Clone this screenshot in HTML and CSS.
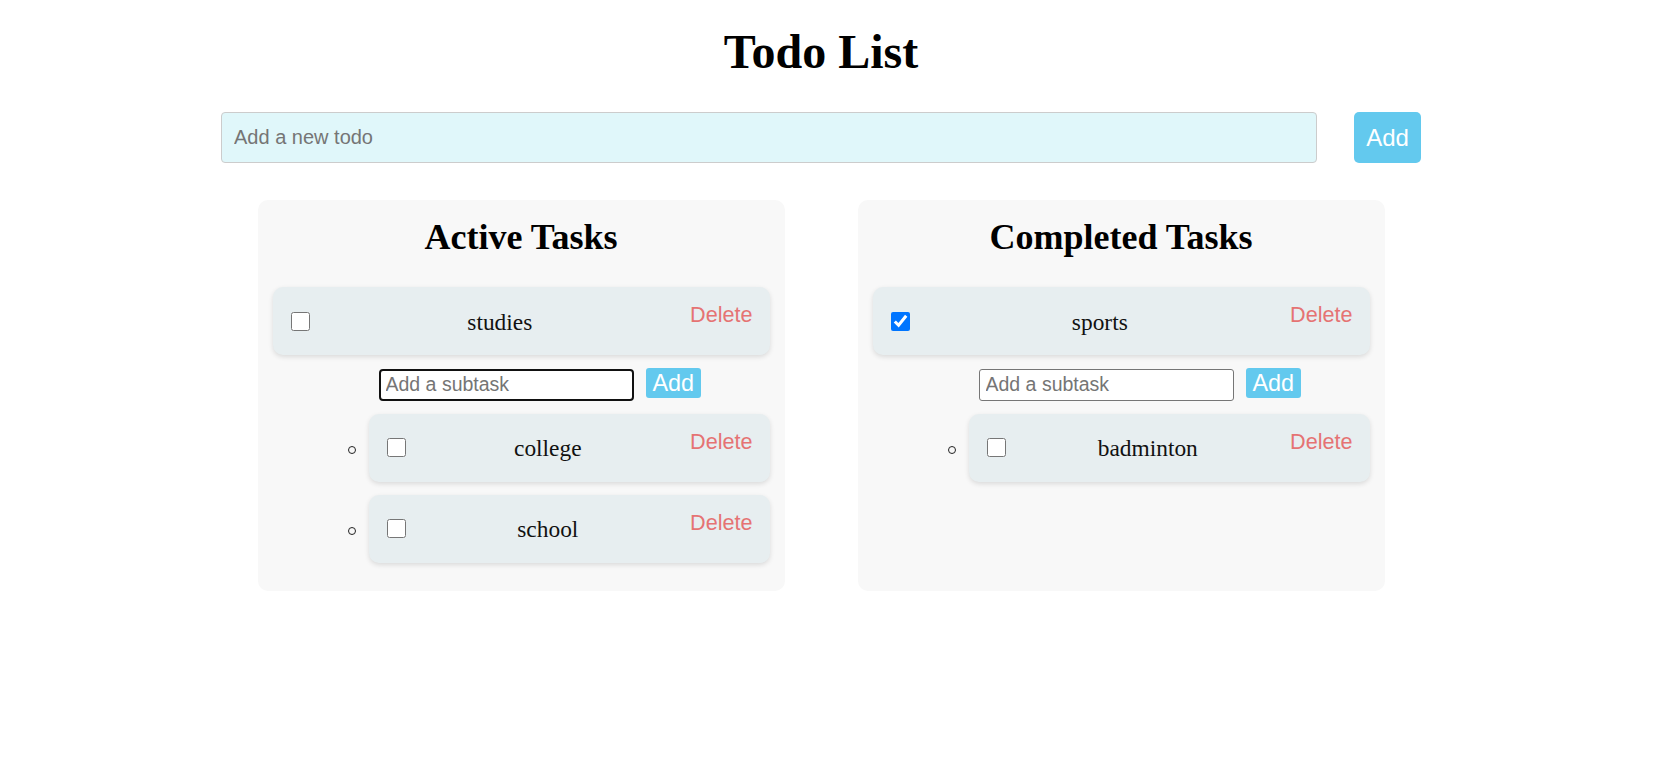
FILE: index.html
```html
<!DOCTYPE html>
<html lang="en">
<head>
<meta charset="utf-8">
<title>Todo List</title>
<link rel="stylesheet" href="styles.css">
</head>
<body>
<div class="app">
  <h1 class="title">Todo List</h1>
  <form class="new-todo">
    <input class="new-todo-input" type="text" placeholder="Add a new todo">
    <button class="new-todo-add" type="button">Add</button>
  </form>
  <div class="columns">
    <section class="panel">
      <h2 class="panel-title">Active Tasks</h2>
      <div class="task">
        <input class="check" type="checkbox">
        <span class="task-text">studies</span>
        <button class="delete" type="button">Delete</button>
      </div>
      <div class="sub-form">
        <input class="sub-input focused" type="text" placeholder="Add a subtask">
        <button class="sub-add" type="button">Add</button>
      </div>
      <ul class="sub-list">
        <li class="sub-item">
          <div class="task">
            <input class="check" type="checkbox">
            <span class="task-text">college</span>
            <button class="delete" type="button">Delete</button>
          </div>
        </li>
        <li class="sub-item">
          <div class="task">
            <input class="check" type="checkbox">
            <span class="task-text">school</span>
            <button class="delete" type="button">Delete</button>
          </div>
        </li>
      </ul>
    </section>
    <section class="panel">
      <h2 class="panel-title">Completed Tasks</h2>
      <div class="task">
        <input class="check" type="checkbox" checked>
        <span class="task-text">sports</span>
        <button class="delete" type="button">Delete</button>
      </div>
      <div class="sub-form">
        <input class="sub-input" type="text" placeholder="Add a subtask">
        <button class="sub-add" type="button">Add</button>
      </div>
      <ul class="sub-list">
        <li class="sub-item">
          <div class="task">
            <input class="check" type="checkbox">
            <span class="task-text">badminton</span>
            <button class="delete" type="button">Delete</button>
          </div>
        </li>
      </ul>
    </section>
  </div>
</div>
</body>
</html>
```

FILE: styles.css
```css
html, body {
  margin: 0;
  background: #ffffff;
}

body {
  padding: 0 20px 0 0;
  font-family: "Liberation Serif", "Times New Roman", serif;
  color: #000;
}

.app {
  width: 1200px;
  margin: 0 auto;
}

.title {
  margin: 25px 0 33px;
  font-size: 48px;
  font-weight: bold;
  text-align: center;
  line-height: 54px;
}

.new-todo {
  display: flex;
  align-items: stretch;
  gap: 37px;
  margin: 0;
}

.new-todo-input {
  flex: 1;
  box-sizing: border-box;
  height: 51px;
  padding: 0 12px;
  border: 1px solid #cccccc;
  border-radius: 4px;
  background: #e0f7fa;
  font-family: "Liberation Sans", Arial, sans-serif;
  font-size: 20px;
  color: #333;
}

.new-todo-input::placeholder {
  color: #757575;
}

.new-todo-add {
  box-sizing: border-box;
  width: 67px;
  height: 51px;
  padding: 0;
  border: none;
  border-radius: 5px;
  background: #63c9ee;
  color: #ffffff;
  font-family: "Liberation Sans", Arial, sans-serif;
  font-size: 24px;
}

.columns {
  display: flex;
  justify-content: space-around;
  align-items: stretch;
  margin-top: 37px;
}

.panel {
  box-sizing: border-box;
  width: 527px;
  padding: 15px 15px 15px;
  border-radius: 10px;
  background: #f8f8f8;
}

.panel-title {
  margin: 2px 0 30px;
  font-size: 36px;
  font-weight: bold;
  text-align: center;
  line-height: 40px;
}

.task {
  display: flex;
  align-items: center;
  box-sizing: border-box;
  height: 68px;
  margin: 0 0 13px;
  padding: 0 17px 0 18px;
  border-radius: 10px;
  background: #e7eef0;
  box-shadow: 0 2px 5px rgba(0, 0, 0, 0.12);
  flex: 1;
}

.check {
  width: 19px;
  height: 19px;
  margin: 0;
  flex: none;
}

.task-text {
  flex: 1;
  text-align: center;
  font-size: 23.4px;
  padding-top: 2px;
  color: #111;
}

.delete {
  align-self: flex-start;
  margin-top: 15px;
  padding: 0;
  border: none;
  background: none;
  color: #e57373;
  font-family: "Liberation Sans", Arial, sans-serif;
  font-size: 21.6px;
}

.sub-form {
  display: flex;
  align-items: baseline;
  gap: 12px;
  margin: 0 0 13px 106px;
}

.sub-input {
  box-sizing: border-box;
  width: 255px;
  height: 32px;
  padding: 0 6px;
  border: 1px solid #767676;
  border-radius: 3px;
  background: #ffffff;
  font-family: "Liberation Sans", Arial, sans-serif;
  font-size: 19.5px;
}

.sub-input::placeholder {
  color: #757575;
}

.sub-input.focused {
  border: 2px solid #111111;
  border-radius: 4px;
  padding: 0 5px;
}

.sub-add {
  box-sizing: border-box;
  height: 30px;
  padding: 0 7px;
  border: none;
  border-radius: 3px;
  background: #63c9ee;
  color: #ffffff;
  font-family: "Liberation Sans", Arial, sans-serif;
  font-size: 23.4px;
  line-height: 30px;
}

.sub-list {
  margin: 0;
  padding: 0 0 0 75px;
  list-style: none;
}

.sub-item {
  display: flex;
  align-items: center;
}

.sub-item::before {
  content: "";
  flex: none;
  box-sizing: border-box;
  width: 8px;
  height: 8px;
  margin: 0 13px 9px 0;
  border: 1.5px solid #222;
  border-radius: 50%;
}
```
